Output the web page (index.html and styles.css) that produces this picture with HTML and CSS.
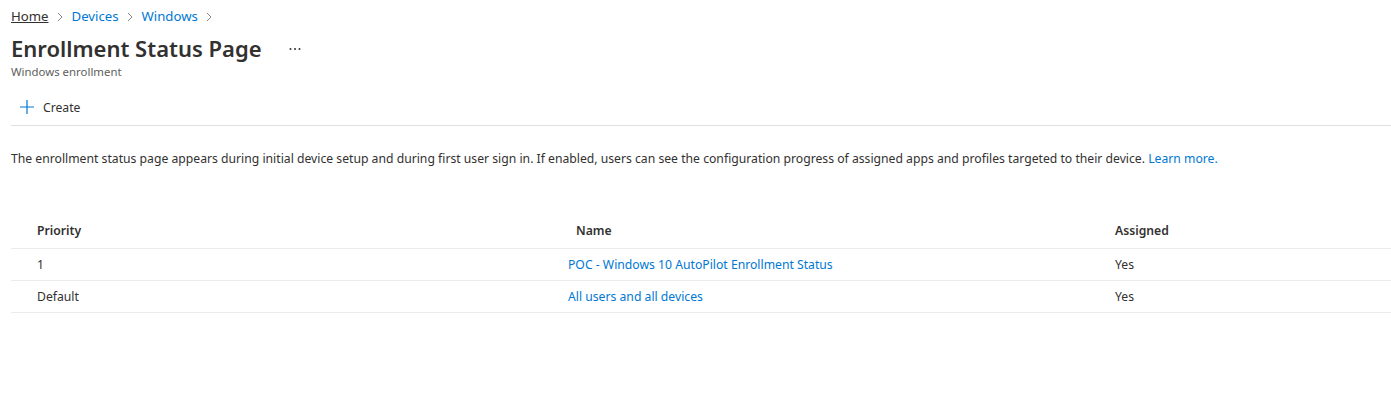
FILE: index.html
```html
<!DOCTYPE html>
<html lang="en">
<head>
<meta charset="utf-8">
<title>Enrollment Status Page</title>
<link rel="stylesheet" href="styles.css">
</head>
<body>

<div class="blade">
	<nav class="crumbs">
		<a class="crumb home" href="#">Home</a>
		<svg class="chev" width="6" height="10" viewBox="0 0 6 10"><path d="M1 1l4 4-4 4" stroke="#8a8886" fill="none"/></svg>
		<a class="crumb" href="#">Devices</a>
		<svg class="chev" width="6" height="10" viewBox="0 0 6 10"><path d="M1 1l4 4-4 4" stroke="#8a8886" fill="none"/></svg>
		<a class="crumb" href="#">Windows</a>
		<svg class="chev" width="6" height="10" viewBox="0 0 6 10"><path d="M1 1l4 4-4 4" stroke="#8a8886" fill="none"/></svg>
	</nav>

	<div class="title-row">
		<h1>Enrollment Status Page</h1>
		<svg class="more" width="12" height="4" viewBox="0 0 12 4"><circle cx="1.5" cy="2" r="1" fill="#323130"/><circle cx="6" cy="2" r="1" fill="#323130"/><circle cx="10.5" cy="2" r="1" fill="#323130"/></svg>
	</div>
	<div class="subtitle">Windows enrollment</div>

	<div class="toolbar">
		<button class="cmd">
			<svg width="16" height="16" viewBox="0 0 16 16"><path d="M8 1v14M1 8h14" stroke="#0078d4" stroke-width="1.2" fill="none"/></svg>
			<span>Create</span>
		</button>
	</div>

	<p class="intro">The enrollment status page appears during initial device setup and during first user sign in. If enabled, users can see the configuration progress of assigned apps and profiles targeted to their device. <a href="#">Learn more.</a></p>

	<div class="grid">
		<div class="row head">
			<div class="cell">Priority</div>
			<div class="cell">Name</div>
			<div class="cell">Assigned</div>
		</div>
		<div class="row">
			<div class="cell">1</div>
			<div class="cell link"><a href="#">POC - Windows 10 AutoPilot Enrollment Status</a></div>
			<div class="cell">Yes</div>
		</div>
		<div class="row">
			<div class="cell">Default</div>
			<div class="cell link"><a href="#">All users and all devices</a></div>
			<div class="cell">Yes</div>
		</div>
	</div>
</div>

</body>
</html>
```

FILE: styles.css
```css
body {
	margin: 0;
	padding: 0;
	background: #fff;
	color: #323130;
	font: normal 12.2px 'Noto Sans', 'Open Sans', sans-serif;
}

a {
	color: #0078d4;
	text-decoration: none;
}

.blade {
	padding: 0 0 0 11px;
}

.crumbs {
	display: flex;
	align-items: center;
	height: 32px;
	font-size: 13.2px;
}

.crumb.home {
	color: #323130;
	text-decoration: underline;
}

.chev {
	margin: 1px 9px 0 8px;
}

.title-row {
	display: flex;
	align-items: center;
	height: 32px;
}

h1 {
	margin: 0;
	font-size: 22px;
	font-weight: 600;
	color: #323130;
}

.more {
	margin: 2px 0 0 27px;
}

.subtitle {
	font-size: 11.4px;
	color: #605e5c;
	height: 16px;
	line-height: 16px;
}

.toolbar {
	margin-top: 13px;
	height: 28px;
	border-bottom: 1px solid #e1dfdd;
	padding-bottom: 4px;
}

.cmd {
	display: flex;
	align-items: center;
	height: 28px;
	padding: 0 0 0 8px;
	background: none;
	border: 0;
	font: inherit;
	color: #323130;
}

.cmd svg {
	margin-right: 8px;
}

.intro {
	margin: 24px 0 0;
	line-height: 18px;
}

.grid {
	margin-top: 45px;
}

.row {
	display: grid;
	grid-template-columns: 539px 539px 1fr;
	height: 31px;
	align-items: center;
	border-bottom: 1px solid #edebe9;
}

.row.head {
	height: 35px;
	font-weight: 600;
}

.cell {
	padding-left: 26px;
}

.row .cell.link {
	padding-left: 18px;
}
```
